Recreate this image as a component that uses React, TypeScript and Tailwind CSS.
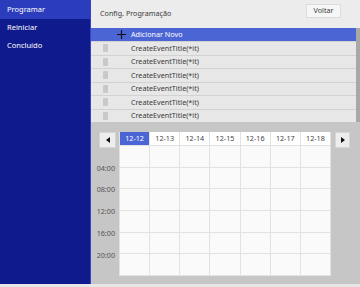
import React from "react";

const menu = ["Programar", "Reiniciar", "Concluído"];
const days = ["12-12", "12-13", "12-14", "12-15", "12-16", "12-17", "12-18"];
const hours = ["04:00", "08:00", "12:00", "16:00", "20:00", ""];

function Plus() {
  return (
    <svg width="9" height="9" viewBox="0 0 9 9" className="block">
      <path d="M4.5 0V9M0 4.5H9" stroke="#111" strokeWidth="1.2" />
    </svg>
  );
}

function Arrow({ dir }: { dir: "left" | "right" }) {
  return (
    <svg width="4" height="6" viewBox="0 0 4 6" className="block">
      {dir === "left" ? <path d="M4 0V6L0 3Z" fill="#111" /> : <path d="M0 0V6L4 3Z" fill="#111" />}
    </svg>
  );
}

export default function App() {
  return (
    <div
      className="w-[360px] h-[287px] flex flex-col bg-[#e4e4e4] overflow-hidden text-[7.2px] leading-none"
      style={{ fontFamily: '"Noto Sans", "Open Sans", sans-serif' }}
    >
      <div className="flex h-[284px]">
        {/* Sidebar */}
        <div className="w-[91px] bg-[#0f1b8c] border-r border-[#3445c4] flex flex-col text-[7.5px]">
          {menu.map((m, i) => (
            <div
              key={m}
              className={`flex items-center pl-[7px] text-white ${
                i === 0 ? "h-[19px] bg-[#2b3cbc]" : "h-[18px]"
              }`}
            >
              {m}
            </div>
          ))}
        </div>

        {/* Main */}
        <div className="flex-1 flex flex-col">
          {/* Header */}
          <div className="h-[28px] bg-[#ececec] flex items-start justify-between pl-[9px] pr-[19px]">
            <span className="mt-[10px] text-[#3a3a3a]">Config. Programação</span>
            <div className="mt-[4px] w-[35px] h-[14px] bg-[#f6f6f6] border border-[#dcdcdc] flex items-center justify-center text-[#3a3a3a]">
              Voltar
            </div>
          </div>

          {/* List */}
          <div className="flex h-[94px]">
            <div className="flex-1 flex flex-col bg-[#e7e7e7]">
              <div className="h-[13px] bg-[#4c65d4] flex items-center text-white">
                <div className="w-[40px] flex justify-end pr-[5px]">
                  <Plus />
                </div>
                <span>Adicionar Novo</span>
              </div>
              {Array.from({ length: 6 }).map((_, i) => (
                <div
                  key={i}
                  className="h-[13.5px] border-t border-[#d2d2d2] flex items-center text-[#3a3a3a]"
                >
                  <div className="w-[40px] pl-[12px]">
                    <div className="w-[5px] h-[8px] bg-[#c9c9c9] rounded-[1px]" />
                  </div>
                  <span>CreateEventTitle(*it)</span>
                </div>
              ))}
            </div>
            <div className="w-[4px] bg-[#a8a8a8]" />
          </div>

          {/* Calendar */}
          <div className="flex-1 bg-[#c6c6c6] pt-[10px] pl-[8px] flex items-start">
            <div className="w-[17px] flex flex-col">
              <div className="h-[16px] w-[17px] bg-[#ededed] border border-[#d6d6d6] flex items-center justify-center">
                <Arrow dir="left" />
              </div>
              {hours.slice(0, 5).map((h, i) => (
                <div
                  key={h}
                  className={`${i === 0 ? "h-[20px]" : "h-[21.7px]"} flex items-end justify-end`}
                >
                  <span className="translate-y-1/2 whitespace-nowrap text-[#555] pr-[1px]">{h}</span>
                </div>
              ))}
            </div>

            <div className="ml-[3px] w-[212px] bg-[#fafafa] border-l border-[#e2e2e2]">
              <div className="grid grid-cols-7 h-[14px]">
                {days.map((d, i) => (
                  <div
                    key={d}
                    className={`flex items-center justify-center border-r border-b border-[#e2e2e2] ${
                      i === 0 ? "bg-[#4c65d4] text-white" : "bg-white text-[#444]"
                    }`}
                  >
                    {d}
                  </div>
                ))}
              </div>
              {hours.map((h, r) => (
                <div key={r} className="grid grid-cols-7 h-[21.7px]">
                  {days.map((d) => (
                    <div key={d} className="border-r border-b border-[#e2e2e2]" />
                  ))}
                </div>
              ))}
            </div>

            <div className="ml-[4px] h-[16px] w-[15px] bg-[#ededed] border border-[#d6d6d6] flex items-center justify-center">
              <Arrow dir="right" />
            </div>
          </div>
        </div>
      </div>
      <div className="h-[3px] bg-[#e6e6e6]" />
    </div>
  );
}
